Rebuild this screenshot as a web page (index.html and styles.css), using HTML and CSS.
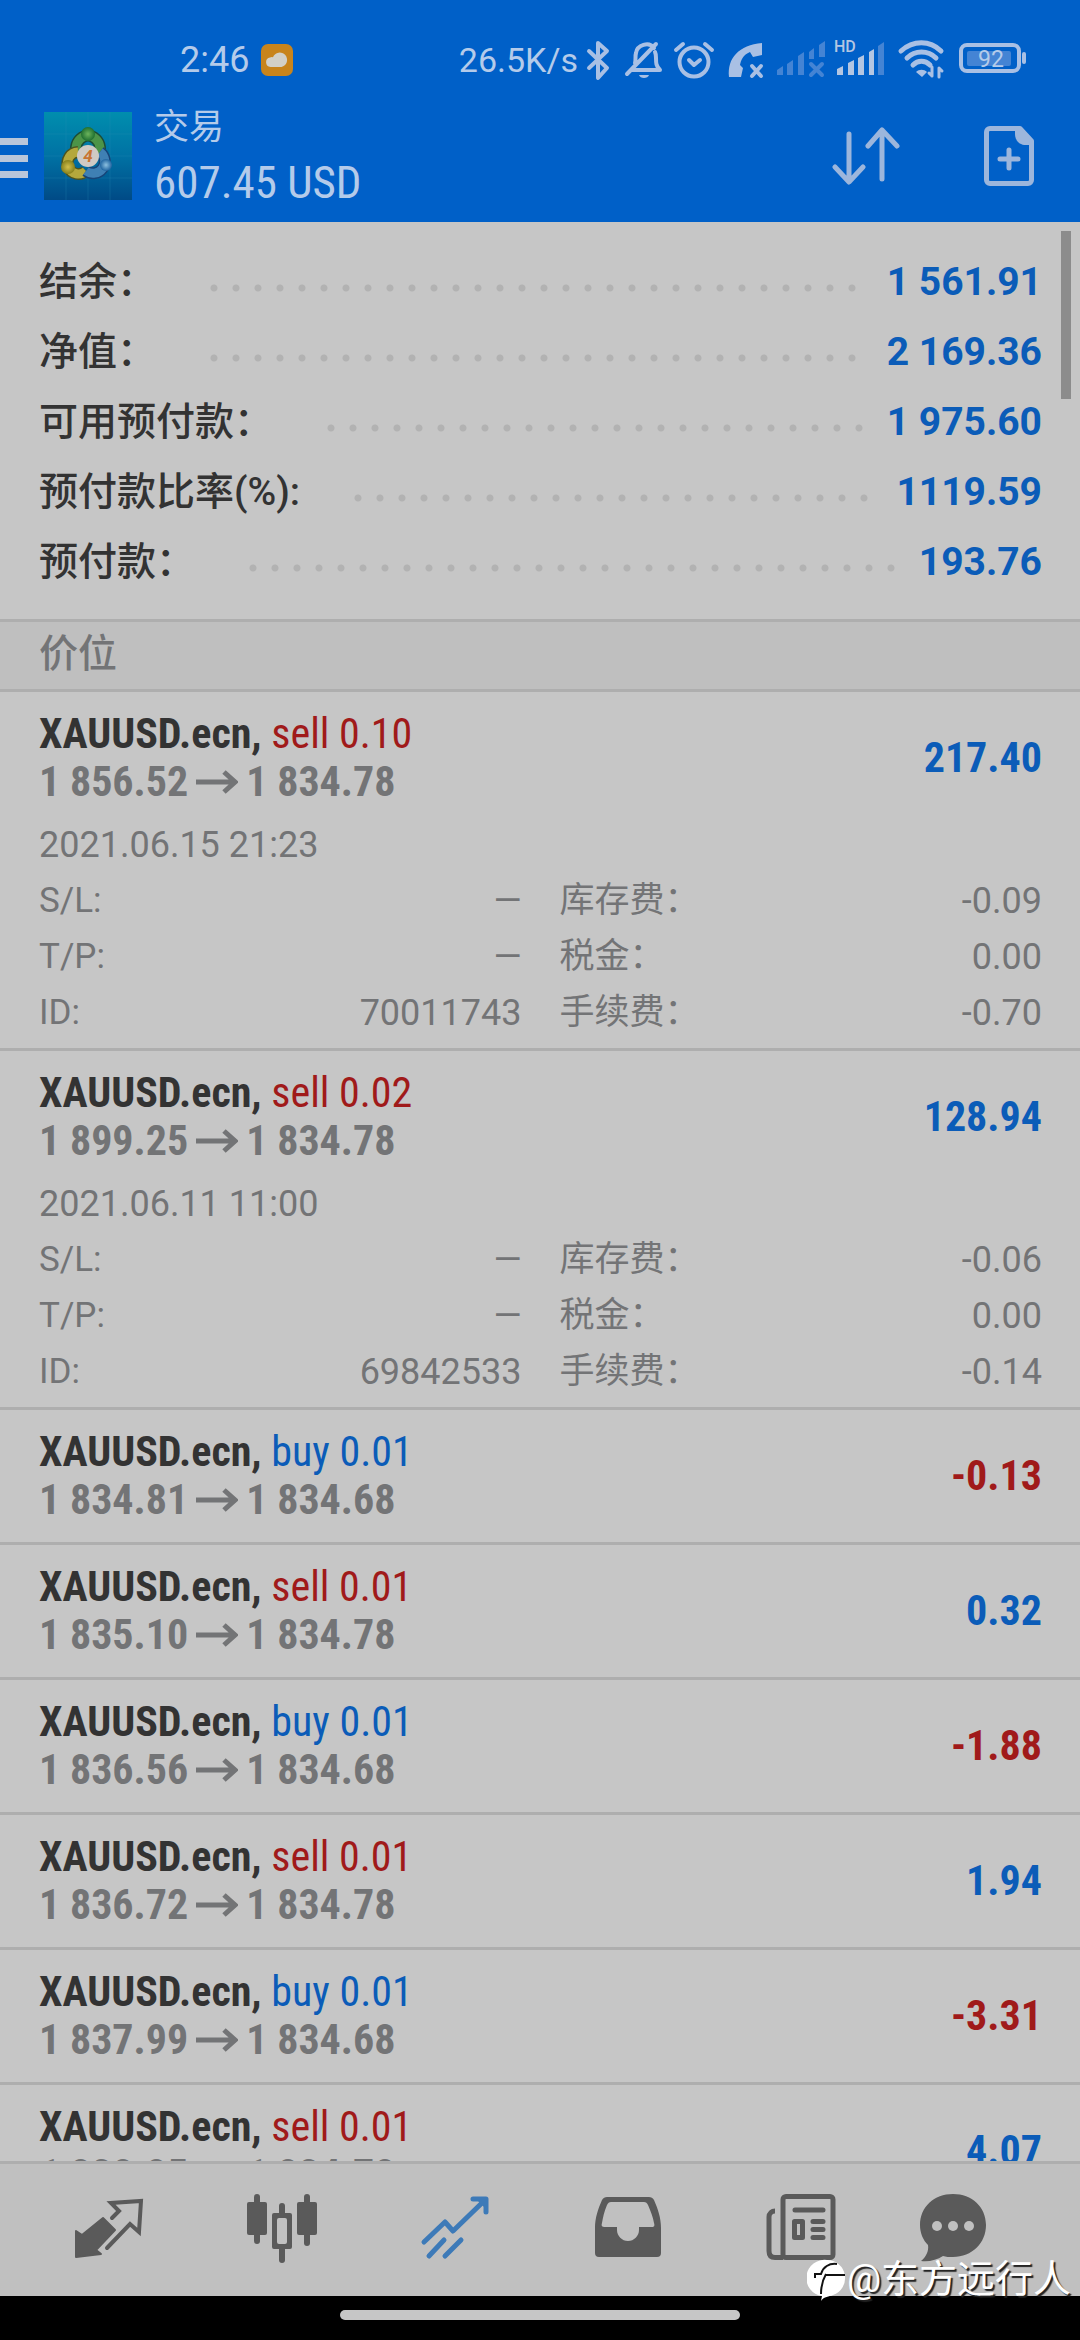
FILE: index.html
```html
<!DOCTYPE html>
<html lang="zh-CN">
<head>
<meta charset="utf-8">
<meta name="viewport" content="width=device-width, initial-scale=1">
<title>交易</title>
<link rel="stylesheet" href="styles.css">
</head>
<body>
<header class="top">
  <div class="status">
    <div class="status-left">
      <span>2:46</span>
      <svg class="weather" width="32" height="32" viewBox="0 0 32 32"><rect width="32" height="32" rx="7" fill="#c8841c"/><path d="M9.500 23a4.800 4.800 0 0 1-.500-9.500 4.500 4.500 0 0 1 3-.300A7.300 7.300 0 1 1 20.500 23z" fill="#d2d0c8"/></svg>
    </div>
    <div class="status-right">
      <span class="speed">26.5K/s</span>
      <svg class="status-icons" width="452" height="44" viewBox="0 0 452 44" fill="none" stroke="#a9c0e4" stroke-width="4" stroke-linecap="round" stroke-linejoin="round">
        <path d="M11 13l18 17-9 10V5l9 8-18 17"/>
        <g transform="translate(-2 0)">
        <path d="M55 32h29c-4-4-4-7-4-12 0-2 0-4-1-6M59 25c1-3 0-7 1-10 1-8 13-12 18-5M51 36L80 6"/><path d="M63 37h10c-1 4-9 4-10 0z" fill="#a9c0e4" stroke="none"/>
        <circle cx="118" cy="24" r="14.500"/><path d="M113 22l5 5 6-5M100 12l7-6M136 12l-7-6"/>
        <path d="M153 39c-2-19 10-32 33-34v12l-9 2-3-5c-7 3-9 8-10 13l3 3-2 9z" fill="#a9c0e4" stroke="none"/><path d="M176 28l9 10M185 28l-9 10"/>
        <g stroke="none" fill="#4484d4"><path d="M201 37v-5l6-4v9zM211 37V26l6-4v15zM222 37V18l6-4v23zM233 21v-7l5-4v11zM243 19V7l6-4v16z"/></g><path d="M235 26l11 11M246 26l-11 11" stroke="#4484d4"/>
        <g stroke="none" fill="#b4c6e2"><path d="M261 37v-6l6-3v9zM272 37V25l6-3v15zM282 37V20l6-3v20zM293 37V14l5-3v26z"/><path d="M302 37V8l6-4v33z" fill="#4484d4"/></g>
        <text x="258" y="14" class="hd">HD</text>
        </g>
        <path d="M323 13c12-11 29-11 40 0M329 20c8-8 21-8 29 0M335 27c5-5 12-5 17 0" stroke-width="5"/><path d="M338 34c3-3 8-3 11 0l-5 5z" fill="#a9c0e4" stroke="none"/><path d="M354 38v-9M354 38l-3-3M361 39v-9M361 30l3 3" stroke-width="3"/>
        <rect x="383" y="7" width="58" height="26" rx="6"/><rect x="389" y="13" width="44" height="15" rx="2" fill="#4484d4" stroke="none"/><path d="M446 16v8" />
        <text x="413" y="29" class="pct">92</text>
      </svg>
    </div>
  </div>
  <div class="bar">
    <button class="menu" aria-label="菜单"><svg width="28" height="40" viewBox="0 0 28 40"><path d="M0 0h28v7H0zM0 17h28v7H0zM0 33h28v7H0z" fill="#b9c6da"/></svg></button>
    <svg class="logo" width="88" height="88" viewBox="0 0 88 88">
      <defs>
        <linearGradient id="sky" x1="0" y1="0" x2="0" y2="1"><stop offset="0" stop-color="#008eae"/><stop offset=".5" stop-color="#0072a4"/><stop offset="1" stop-color="#004a86"/></linearGradient>
        <radialGradient id="gr"><stop offset="0" stop-color="#6cb45c"/><stop offset="1" stop-color="#1f6f30"/></radialGradient>
        <radialGradient id="ye"><stop offset="0" stop-color="#d2c04c"/><stop offset="1" stop-color="#86801c"/></radialGradient>
        <radialGradient id="bl"><stop offset="0" stop-color="#8cc0e0"/><stop offset="1" stop-color="#1f64a0"/></radialGradient>
      </defs>
      <rect width="88" height="88" fill="url(#sky)"/>
      <path d="M22 0v88M44 0v88M66 0v88M0 22h88M0 44h88M0 66h88" stroke="#2a94b8" stroke-opacity=".25"/>
      <g fill="none">
        <path d="M34 44a12 13 0 1 1 20 0" stroke="#1d4c34" stroke-width="12"/><path d="M34 44a12 13 0 1 1 20 0" stroke="#4c9448" stroke-width="9"/>
        <path d="M34 40a11 11 0 1 0 8 19" stroke="#4c5420" stroke-width="12"/><path d="M34 40a11 11 0 1 0 8 19" stroke="#b4a83c" stroke-width="9"/>
        <path d="M56 40a11 11 0 1 1-14 19" stroke="#174478" stroke-width="12"/><path d="M56 40a11 11 0 1 1-14 19" stroke="#3f80b4" stroke-width="9"/>
      </g>
      <circle cx="44" cy="22" r="7" fill="url(#gr)"/><circle cx="24" cy="55" r="7" fill="url(#ye)"/><circle cx="62" cy="53" r="6" fill="url(#bl)"/>
      <circle cx="44" cy="44" r="11" fill="#cfcac4"/><text x="44" y="50" class="four">4</text>
    </svg>
    <div class="heading"><h1>交易</h1><p>607.45 USD</p></div>
    <button class="sort" aria-label="排序"><svg width="68" height="60" viewBox="0 0 68 60" fill="none" stroke="#9cb6dc" stroke-width="5" stroke-linecap="round" stroke-linejoin="round"><path d="M17 8v47M3 41l14 15 14-15M50 53V5M36 20L50 4l15 16"/></svg></button>
    <button class="new" aria-label="新订单"><svg width="50" height="60" viewBox="0 0 50 60" fill="none" stroke="#9cb6dc" stroke-width="5" stroke-linejoin="round" stroke-linecap="round"><path d="M6 2.500h30L47.500 15v39a3.500 3.500 0 0 1-3.500 3.500H6A3.500 3.500 0 0 1 2.500 54V6A3.500 3.500 0 0 1 6 2.500z"/><path d="M31 3h6l11 12v4h-6c-7 0-11-5-11-11z" fill="#9cb6dc" stroke="none"/><path d="M25 24v18M16 33h18"/></svg></button>
  </div>
</header>
<main class="content">
  <div class="scrollbar"></div>
  <dl class="summary">
    <div><dt>结余：</dt><dd>1 561.91</dd></div>
    <div><dt>净值：</dt><dd>2 169.36</dd></div>
    <div><dt>可用预付款：</dt><dd>1 975.60</dd></div>
    <div><dt>预付款比率(%):</dt><dd>1119.59</dd></div>
    <div><dt>预付款：</dt><dd>193.76</dd></div>
  </dl>
  <h2 class="section">价位</h2>
  <ul class="trades">
    <li class="open">
      <div class="head"><div><p class="symbol"><b>XAUUSD.ecn,</b> <span class="sell">sell 0.10</span></p><p class="prices">1 856.52<svg class="arrow" viewBox="0 0 42 24"><path d="M0 12h38M28 2l11 10-11 10"/></svg>1 834.78</p></div><strong class="gain">217.40</strong></div>
      <p class="time">2021.06.15 21:23</p>
      <dl class="details">
        <div><dt>S/L:</dt><dd>—</dd></div><div><dt>库存费：</dt><dd>-0.09</dd></div>
        <div><dt>T/P:</dt><dd>—</dd></div><div><dt>税金：</dt><dd>0.00</dd></div>
        <div><dt>ID:</dt><dd>70011743</dd></div><div><dt>手续费：</dt><dd>-0.70</dd></div>
      </dl>
    </li>
    <li class="open">
      <div class="head"><div><p class="symbol"><b>XAUUSD.ecn,</b> <span class="sell">sell 0.02</span></p><p class="prices">1 899.25<svg class="arrow" viewBox="0 0 42 24"><path d="M0 12h38M28 2l11 10-11 10"/></svg>1 834.78</p></div><strong class="gain">128.94</strong></div>
      <p class="time">2021.06.11 11:00</p>
      <dl class="details">
        <div><dt>S/L:</dt><dd>—</dd></div><div><dt>库存费：</dt><dd>-0.06</dd></div>
        <div><dt>T/P:</dt><dd>—</dd></div><div><dt>税金：</dt><dd>0.00</dd></div>
        <div><dt>ID:</dt><dd>69842533</dd></div><div><dt>手续费：</dt><dd>-0.14</dd></div>
      </dl>
    </li>
    <li><div class="head"><div><p class="symbol"><b>XAUUSD.ecn,</b> <span class="buy">buy 0.01</span></p><p class="prices">1 834.81<svg class="arrow" viewBox="0 0 42 24"><path d="M0 12h38M28 2l11 10-11 10"/></svg>1 834.68</p></div><strong class="loss">-0.13</strong></div></li>
    <li><div class="head"><div><p class="symbol"><b>XAUUSD.ecn,</b> <span class="sell">sell 0.01</span></p><p class="prices">1 835.10<svg class="arrow" viewBox="0 0 42 24"><path d="M0 12h38M28 2l11 10-11 10"/></svg>1 834.78</p></div><strong class="gain">0.32</strong></div></li>
    <li><div class="head"><div><p class="symbol"><b>XAUUSD.ecn,</b> <span class="buy">buy 0.01</span></p><p class="prices">1 836.56<svg class="arrow" viewBox="0 0 42 24"><path d="M0 12h38M28 2l11 10-11 10"/></svg>1 834.68</p></div><strong class="loss">-1.88</strong></div></li>
    <li><div class="head"><div><p class="symbol"><b>XAUUSD.ecn,</b> <span class="sell">sell 0.01</span></p><p class="prices">1 836.72<svg class="arrow" viewBox="0 0 42 24"><path d="M0 12h38M28 2l11 10-11 10"/></svg>1 834.78</p></div><strong class="gain">1.94</strong></div></li>
    <li><div class="head"><div><p class="symbol"><b>XAUUSD.ecn,</b> <span class="buy">buy 0.01</span></p><p class="prices">1 837.99<svg class="arrow" viewBox="0 0 42 24"><path d="M0 12h38M28 2l11 10-11 10"/></svg>1 834.68</p></div><strong class="loss">-3.31</strong></div></li>
    <li><div class="head"><div><p class="symbol"><b>XAUUSD.ecn,</b> <span class="sell">sell 0.01</span></p><p class="prices">1 838.85<svg class="arrow" viewBox="0 0 42 24"><path d="M0 12h38M28 2l11 10-11 10"/></svg>1 834.78</p></div><strong class="gain">4.07</strong></div></li>
  </ul>
</main>
<nav class="tabs">
  <button aria-label="行情"><svg viewBox="1 0 72 72"><path d="M31 26l12 12-19 20 5 4-25 3V39l6 4z" fill="#5a5a5a" stroke="#5a5a5a" stroke-width="2" stroke-linejoin="round"/><path d="M40 26l7-7-8-8 30-2-2 31-9-8-23 24" fill="none" stroke="#5a5a5a" stroke-width="4" stroke-linecap="round"/></svg></button>
  <button aria-label="图表"><svg viewBox="0 0 72 72" fill="#5a5a5a"><rect x="1" y="10" width="20" height="33" rx="2"/><rect x="8" y="2" width="6" height="50" rx="3"/><rect x="51" y="10" width="20" height="33" rx="2"/><rect x="58" y="2" width="6" height="52" rx="3"/><rect x="33" y="11" width="6" height="14" rx="3"/><rect x="33" y="52" width="6" height="19" rx="3"/><path d="M28 21h16a2 2 0 0 1 2 2v32a2 2 0 0 1-2 2H28a2 2 0 0 1-2-2V23a2 2 0 0 1 2-2zm5 5a2 2 0 0 0-2 2v22a2 2 0 0 0 2 2h6a2 2 0 0 0 2-2V28a2 2 0 0 0-2-2z" fill-rule="evenodd"/></svg></button>
  <button aria-label="交易" aria-current="page"><svg viewBox="0 0 72 72" fill="none" stroke="#3d7ab8" stroke-width="5" stroke-linecap="round" stroke-linejoin="round"><path d="M5 50l21-20 8 9L66 8M54 7h13v13M10 64l15-16M26 64l16-16"/><path d="M56 6h11v11z" fill="#3d7ab8" stroke="none"/></svg></button>
  <button aria-label="历史"><svg viewBox="0 0 72 72" fill="#5a5a5a"><path d="M15 5h42c2 0 4 1 5 3 4 9 7 18 7 28v25a4 4 0 0 1-4 4H7a4 4 0 0 1-4-4V36C3 26 6 17 10 8c1-2 3-3 5-3zm4 5c-2 0-3 1-4 3-3 7-4 12-5 18-1 3 0 4 3 4h12v3c0 6 5 11 11 11s11-5 11-11v-3h13c2 0 3-1 2-4-1-6-3-11-6-18-1-2-2-3-4-3z" fill-rule="evenodd"/></svg></button>
  <button aria-label="新闻"><svg viewBox="0 0 72 72" fill="none" stroke="#5a5a5a" stroke-width="5" stroke-linecap="round" stroke-linejoin="round"><rect x="18" y="4.500" width="50" height="61" rx="3"/><path d="M10 19c-3 0-6 2-6 6v34c0 4 2 6.500 6 6.500h8" stroke-linecap="butt"/><path d="M30 18h28M48 29.500h10M48 37.500h10M48 45.500h10"/><rect x="29.500" y="29.500" width="8" height="16"/></svg></button>
  <button aria-label="消息"><svg viewBox="0 0 72 72"><path d="M36 2c19 0 33 13 33 31S55 65 36 65c-4 0-7 0-10-1-6 4-14 6-22 5 5-4 8-10 7-16C6 48 3 41 3 33 3 15 17 2 36 2z" fill="#5a5a5a"/><g fill="#c0c0c0"><circle cx="20" cy="34" r="5"/><circle cx="36" cy="34" r="5"/><circle cx="52" cy="34" r="5"/></g></svg></button>
</nav>
<footer class="home"><div></div></footer>
<div class="watermark"><svg width="40" height="44" viewBox="0 0 40 44"><path d="M20 3a18 18 0 0 1 6 35c-4 2-9 1-12 6l1-5A18 18 0 0 1 20 3z" fill="#fff"/><path d="M8 21v-4h6c2-7 8-11 16-10M19 17c-4 7-5 14-5 20M19 18h19" fill="none" stroke="#111" stroke-width="2"/></svg><span>@东方远行人</span></div>
</body>
</html>
```
FILE: styles.css
```css
* { box-sizing: border-box; margin: 0; padding: 0; }

:root {
  --cjk: "Noto Sans CJK SC";
  --condensed: "Roboto Condensed", "Liberation Sans Narrow";
  --ink: #333333;
  --muted: #737476;
  --blue: #0b5cb8;
  --red: #a01a1a;
  --line: #aeaeae;
}

body {
  position: relative;
  display: flex;
  flex-direction: column;
  height: 100vh;
  overflow: hidden;
  background: #c6c6c6;
  color: var(--ink);
  font-family: Roboto, var(--cjk), sans-serif;
}

button { background: none; border: 0; display: block; }
svg { display: block; }
ul { list-style: none; }

/* header */
.top { flex: none; background: #0060c8; color: #b4cbea; padding-top: 38px; height: 222px; }
.status { display: flex; justify-content: space-between; height: 44px; padding: 0 50px 0 180px; font-size: 36px; line-height: 44px; }
.status-left, .status-right { display: flex; align-items: center; }
.status-left { gap: 12px; }
.speed { font-size: 34px; }
.hd { font: 500 16px Roboto, sans-serif; fill: #b4c6e2; stroke: none; }
.pct { font: 400 23px Roboto, sans-serif; fill: #b4cbea; stroke: none; text-anchor: middle; }
.bar { display: flex; align-items: center; height: 140px; padding: 8px 46px 0 0; }
.logo { margin: 0 22px 0 16px; }
.menu { margin-top: 4px; }
.heading { flex: 1; margin-top: 4px; }
.heading h1 { font-size: 35px; font-weight: 400; line-height: 50px; }
.heading p { font-family: var(--condensed), sans-serif; font-size: 45px; line-height: 60px; }
.sort { margin-right: 84px; }
.four { font: italic 700 17px Roboto, sans-serif; fill: #c87432; text-anchor: middle; }

/* account summary */
.content { position: relative; flex: 1; min-height: 0; overflow: hidden; }
.scrollbar { position: absolute; top: 9px; right: 9px; width: 10px; height: 168px; background: #8c8c8c; }
.summary { padding: 25px 38px 22px 39px; font-size: 39px; line-height: 70px; font-weight: 500; }
.summary div { display: flex; gap: 20px; }
.summary div::after {
  content: "";
  order: 1;
  flex: 1;
  margin-left: 34px;
  background: radial-gradient(circle at 4px 4px, #b2b2b2 3px, transparent 4px) 0 37px / 22px 33px repeat-x;
}
.summary dd { order: 2; color: var(--blue); font-weight: 700; }
.section { border: solid var(--line); border-width: 3px 0; padding: 0 38px 3px 39px; background: #bfbfbf; color: var(--muted); font-size: 39px; line-height: 64px; font-weight: 500; }

/* positions */
.trades li { padding: 18px 38px 18px 39px; border-bottom: 3px solid var(--line); }
.trades .open { padding-bottom: 7px; }
.head { display: flex; justify-content: space-between; align-items: center; font-family: var(--condensed), sans-serif; font-size: 42px; line-height: 48px; }
.prices { display: flex; align-items: center; color: var(--muted); font-weight: 700; }
.arrow { width: 42px; height: 24px; margin: 0 8px; fill: none; stroke: var(--muted); stroke-width: 5; }
.sell, .loss { color: var(--red); }
.buy, .gain { color: var(--blue); }
.time { margin-top: 11px; }
.time, .details { color: var(--muted); font-size: 36px; line-height: 56px; }
.details { display: grid; grid-template-columns: 1fr 1fr; column-gap: 38px; }
.details div { display: flex; justify-content: space-between; }
.details dt { font-size: 35px; }

/* bottom tabs */
.tabs { flex: none; display: grid; grid-template-columns: repeat(5, 173fr) 131fr; padding: 28px 62px 0 22px; height: 135px; border-top: 3px solid var(--line); background: #c0c0c0; }
.tabs svg { width: 72px; height: 72px; margin: 0 auto; }
.tabs button { height: 72px; }
.home { flex: none; height: 44px; padding-top: 14px; background: #000; }
.home div { width: 37%; height: 10px; margin: 0 auto; border-radius: 5px; background: #c6c6c6; }

.watermark { position: absolute; right: 9px; bottom: 36px; display: flex; align-items: center; color: #fff; font-size: 38px; line-height: 50px; text-shadow: 2px 2px 1px #222; }
```
